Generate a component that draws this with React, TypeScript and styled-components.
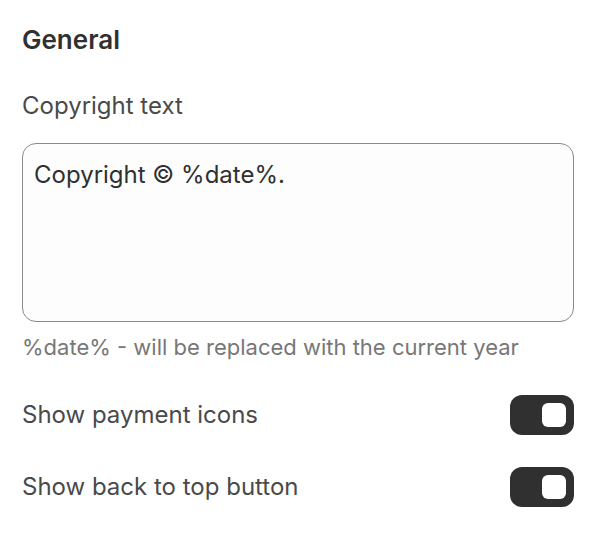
import React, { useState } from 'react';
import styled, { createGlobalStyle } from 'styled-components';

const GlobalStyle = createGlobalStyle`
  body {
    margin: 0;
    background: #ffffff;
    font-family: Inter, "Noto Sans", sans-serif;
    color: #303030;
  }
`;

type ToggleProps = {
  checked: boolean;
  onChange: (v: boolean) => void;
};

const Toggle = ({ checked, onChange }: ToggleProps) => (
  <ToggleTrack
    type="button"
    role="switch"
    aria-checked={checked}
    $checked={checked}
    onClick={() => onChange(!checked)}
  >
    <ToggleKnob />
  </ToggleTrack>
);

export default function App() {
  const [text, setText] = useState('Copyright © %date%.');
  const [payment, setPayment] = useState(true);
  const [backToTop, setBackToTop] = useState(true);

  return (
    <>
      <GlobalStyle />
      <Panel>
        <Title>General</Title>
        <Field>
          <Label>Copyright text</Label>
          <TextArea value={text} onChange={(e) => setText(e.target.value)} />
          <Hint>%date% - will be replaced with the current year</Hint>
        </Field>
        <ToggleList>
          <ToggleRow>
            <RowLabel>Show payment icons</RowLabel>
            <Toggle checked={payment} onChange={setPayment} />
          </ToggleRow>
          <ToggleRow>
            <RowLabel>Show back to top button</RowLabel>
            <Toggle checked={backToTop} onChange={setBackToTop} />
          </ToggleRow>
        </ToggleList>
      </Panel>
    </>
  );
}

const Panel = styled.div`
  width: 552px;
  padding: 24px 24px 0 22px;
  display: flex;
  flex-direction: column;
`;

const Title = styled.h2`
  margin: 0;
  font-size: 26px;
  line-height: 32px;
  font-weight: 600;
  color: #303030;
`;

const Field = styled.div`
  margin-top: 36px;
  display: flex;
  flex-direction: column;
`;

const Label = styled.label`
  font-size: 24px;
  line-height: 28px;
  color: #4a4a4a;
`;

const TextArea = styled.textarea`
  margin-top: 23px;
  box-sizing: border-box;
  width: 552px;
  height: 179px;
  padding: 16px 11px;
  border: 1px solid #8a8a8a;
  border-radius: 14px;
  background: #fdfdfd;
  font-family: Inter, "Noto Sans", sans-serif;
  font-size: 24px;
  line-height: 30px;
  color: #303030;
  resize: none;
  outline: none;
`;

const Hint = styled.p`
  margin: 11px 0 0;
  font-size: 22px;
  line-height: 28px;
  color: #777777;
`;

const ToggleList = styled.div`
  margin-top: 34px;
  display: flex;
  flex-direction: column;
  gap: 32px;
`;

const ToggleRow = styled.div`
  display: flex;
  align-items: center;
  justify-content: space-between;
`;

const RowLabel = styled.span`
  font-size: 24px;
  line-height: 28px;
  color: #4a4a4a;
`;

const ToggleTrack = styled.button<{ $checked: boolean }>`
  width: 64px;
  height: 40px;
  padding: 0 8px;
  border: none;
  border-radius: 12px;
  background: ${({ $checked }) => ($checked ? '#303030' : '#c9c9c9')};
  display: flex;
  align-items: center;
  justify-content: ${({ $checked }) => ($checked ? 'flex-end' : 'flex-start')};
  cursor: pointer;
`;

const ToggleKnob = styled.span`
  width: 24px;
  height: 24px;
  border-radius: 6px;
  background: #ffffff;
`;
